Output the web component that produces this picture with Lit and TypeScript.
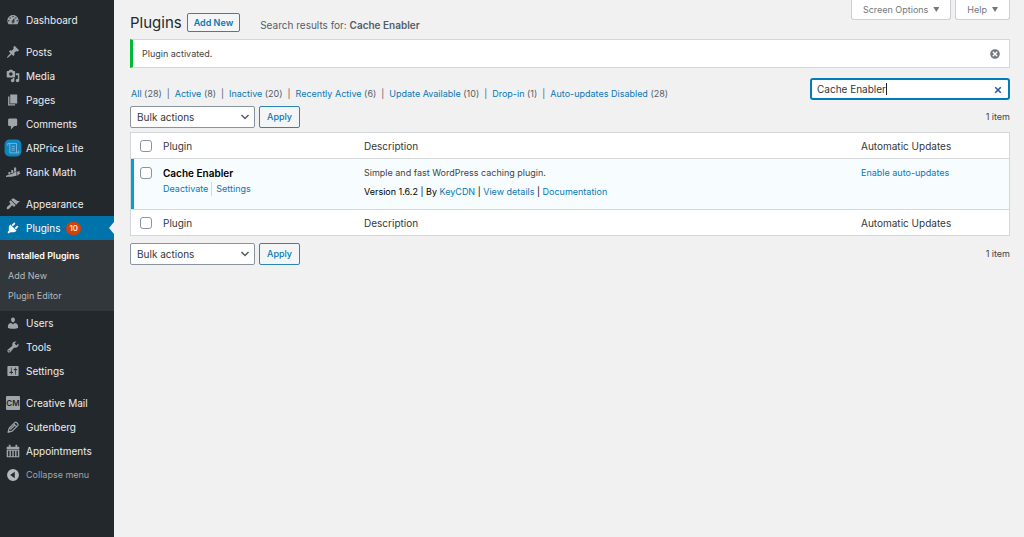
import { LitElement, html, svg, css, nothing } from "lit";
import { customElement, property } from "lit/decorators.js";
import { classMap } from "lit/directives/class-map.js";

const icons: Record<string, unknown> = {
  dashboard: svg`<path fill-rule="evenodd" d="M3.76 16h12.48c1.1-1.37 1.76-3.11 1.76-5 0-4.42-3.58-8-8-8s-8 3.58-8 8c0 1.89.66 3.63 1.76 5zM10 4c.55 0 1 .45 1 1s-.45 1-1 1-1-.45-1-1 .45-1 1-1zM6 6c.55 0 1 .45 1 1s-.45 1-1 1-1-.45-1-1 .45-1 1-1zm8 0c.55 0 1 .45 1 1s-.45 1-1 1-1-.45-1-1 .45-1 1-1zm-5.37 5.55L12 7v6c0 1.1-.9 2-2 2s-2-.9-2-2c0-.57.24-1.08.63-1.45zM4 10c.55 0 1 .45 1 1s-.45 1-1 1-1-.45-1-1 .45-1 1-1zm12 0c.55 0 1 .45 1 1s-.45 1-1 1-1-.45-1-1 .45-1 1-1zm-5 3c0-.55-.45-1-1-1s-1 .45-1 1 .45 1 1 1 1-.45 1-1z"/>`,
  post: svg`<path d="M10.44 3.02l1.82-1.82 6.36 6.35-1.83 1.82c-1.05-.68-2.48-.57-3.41.36l-.75.75c-.92.93-1.04 2.35-.35 3.41l-1.83 1.82-2.41-2.41-2.8 2.79c-.42.42-3.38 2.71-3.8 2.29s1.86-3.39 2.28-3.81l2.79-2.79L4.1 9.36l1.83-1.82c1.05.69 2.48.57 3.4-.36l.75-.75c.93-.92 1.05-2.35.36-3.41z"/>`,
  media: svg`<path fill-rule="evenodd" d="M13 11V4c0-.55-.45-1-1-1h-1.67L9 1H5L3.67 3H2c-.55 0-1 .45-1 1v7c0 .55.45 1 1 1h10c.55 0 1-.45 1-1zM7 4.5c1.38 0 2.5 1.12 2.5 2.5S8.38 9.5 7 9.5 4.5 8.38 4.5 7 5.62 4.5 7 4.5zM14 6h5v10.5c0 1.38-1.12 2.5-2.5 2.5S14 17.88 14 16.5s1.12-2.5 2.5-2.5c.17 0 .34.02.5.05V9h-3V6zm-4 8.05V13h2v3.5c0 1.38-1.12 2.5-2.5 2.5S7 17.88 7 16.5 8.12 14 9.5 14c.17 0 .34.02.5.05z"/>`,
  page: svg`<path d="M6 15V2h10v13H6zm-1 1h8v2H3V5h2v11z"/>`,
  comment: svg`<path d="M5 2h9c1.1 0 2 .9 2 2v7c0 1.1-.9 2-2 2h-2l-5 5v-5H5c-1.1 0-2-.9-2-2V4c0-1.1.9-2 2-2z"/>`,
  price: svg`<rect x="-2" y="-2" width="24" height="24" rx="7" fill="#0d86c0"/><g fill="none" stroke="#8fb9d6" stroke-width="1.2"><path d="M2.500 3.500H15V17M5.500 3.500V17H18M2.500 3.500V6.500M18 17V14"/><path d="M8 7.500h4.500M8 10.300h4.500M8 13h4.500"/></g>`,
  rank: svg`<path d="M0 15.500L5 13.500 9 13 12 10.500 15 9V15.500C10 17 5 17 0 17zM3.500 10h2.800v2.500L3.500 13.500zM7.500 7h2.800v4.500L7.500 12.300zM11.500 3.500h3v5L11.500 10zM16 9.500l3.500-1v3h1.500L16 15.500z"/>`,
  appearance: svg`<path d="M14.48 11.06L7.41 3.99l1.5-1.5c.5-.56 2.3-.47 3.51.32 1.21.8 1.43 1.28 2.91 2.1 1.18.64 2.45 1.26 4.45.85zm-.71.71L6.7 4.7 4.93 6.47c-.39.39-.39 1.02 0 1.41l1.06 1.06c.39.39.39 1.03 0 1.42-.6.6-1.43 1.11-2.21 1.69-.35.26-.7.53-1.01.84C1.43 14.23.4 16.08 1.4 17.07c.99 1 2.84-.03 4.18-1.36.31-.31.58-.66.85-1.02.57-.78 1.08-1.61 1.69-2.21.39-.39 1.02-.39 1.41 0l1.06 1.06c.39.39 1.02.39 1.41 0z"/>`,
  plugin: svg`<path d="M13.11 4.36L9.87 7.6 8 5.73l3.24-3.24c.35-.34 1.05-.2 1.56.32.52.51.66 1.21.31 1.55zm-8 1.77l.91-1.12 9.01 9.01-1.19.84c-.71.71-2.63 1.16-3.82 1.16H6.14L4.9 17.26c-.59.59-1.54.59-2.12 0-.59-.58-.59-1.53 0-2.12l1.24-1.24v-3.88c0-1.13.4-3.19 1.09-3.89zm7.26 3.97l3.24-3.24c.34-.35 1.04-.21 1.55.31.52.51.66 1.21.31 1.55l-3.24 3.25z"/>`,
  user: svg`<path d="M10 9.25c-2.27 0-2.73-3.44-2.73-3.44C7 4.02 7.82 2 9.97 2c2.16 0 2.98 2.02 2.71 3.81 0 0-.41 3.44-2.68 3.44zm0 2.57L12.72 10c2.39 0 4.52 2.33 4.52 4.53v2.49s-3.65 1.13-7.24 1.13c-3.65 0-7.24-1.13-7.24-1.13v-2.49c0-2.25 1.94-4.48 4.47-4.48z"/>`,
  tool: svg`<path fill-rule="evenodd" d="M16.68 9.77c-1.34 1.34-3.3 1.67-4.95.99l-5.41 6.52c-.99.99-2.59.99-3.58 0s-.99-2.59 0-3.57l6.52-5.42c-.68-1.65-.35-3.61.99-4.95 1.28-1.28 3.12-1.62 4.72-1.06l-2.89 2.89 2.82 2.82 2.86-2.87c.53 1.58.18 3.39-1.08 4.65zM3.81 16.21c.4.39 1.04.39 1.43 0 .4-.4.4-1.04 0-1.43-.39-.4-1.03-.4-1.43 0-.39.39-.39 1.03 0 1.43z"/>`,
  settings: svg`<path fill-rule="evenodd" d="M18 16V4c0-.55-.45-1-1-1H3c-.55 0-1 .45-1 1v12c0 .55.45 1 1 1h14c.55 0 1-.45 1-1zM8 11h1c.55 0 1 .45 1 1s-.45 1-1 1H8v1.5c0 .28-.22.5-.5.5s-.5-.22-.5-.5V13H6c-.55 0-1-.45-1-1s.45-1 1-1h1V5.500c0-.28.22-.5.5-.5s.5.22.5.5V11zm5-2h-1c-.55 0-1-.45-1-1s.45-1 1-1h1V5.500c0-.28.22-.5.5-.5s.5.22.5.5V7h1c.55 0 1 .45 1 1s-.45 1-1 1h-1v5.500c0 .28-.22.5-.5.5s-.5-.22-.5-.5V9z"/>`,
  pencil: svg`<path fill="none" stroke="currentColor" stroke-width="1.700" stroke-linejoin="round" d="M3 17.500L4.500 11.800 12.500 3.800Q13.800 2.500 15.200 3.800L16.800 5.400Q18 6.700 16.800 8L8.800 16zM11 5.500L15 9.500M6 13.500L13 6.800"/><path d="M2.500 18l1-4 3 3z"/>`,
  calendar: svg`<path fill-rule="evenodd" d="M1 4h3V1h2.500v3h7V1H16v3h3v3H1zM1 8h18v11H1zM3 9.500v8h2v-8zM7 9.500v8h2v-8zM11 9.500v8h2v-8zM15 9.500v8h2v-8z"/>`,
  collapse: svg`<path fill-rule="evenodd" d="M10 1.500a8.500 8.500 0 1 0 0 17 8.500 8.500 0 0 0 0-17zM12.500 5.500v9L6 10z"/>`,
  dismiss: svg`<path fill-rule="evenodd" d="M10 2a8 8 0 1 0 0 16 8 8 0 0 0 0-16zM7 5.500L10 8.300 13 5.500 14.500 7 11.700 10 14.500 13 13 14.500 10 11.700 7 14.500 5.500 13 8.300 10 5.500 7z"/>`,
  clear: svg`<path fill="none" stroke="currentColor" stroke-width="4" d="M3 3L17 17M17 3L3 17"/>`,
};

const icon = (name: string) =>
  html`<svg class="icon" viewBox="0 0 20 20" fill="currentColor" aria-hidden="true">${icons[name]}</svg>`;

interface MenuItem {
  label: string;
  icon: string;
  count?: number;
  children?: string[];
}

const menu: MenuItem[][] = [
  [{ label: "Dashboard", icon: "dashboard" }],
  [
    { label: "Posts", icon: "post" },
    { label: "Media", icon: "media" },
    { label: "Pages", icon: "page" },
    { label: "Comments", icon: "comment" },
    { label: "ARPrice Lite", icon: "price" },
    { label: "Rank Math", icon: "rank" },
  ],
  [
    { label: "Appearance", icon: "appearance" },
    { label: "Plugins", icon: "plugin", count: 10, children: ["Installed Plugins", "Add New", "Plugin Editor"] },
    { label: "Users", icon: "user" },
    { label: "Tools", icon: "tool" },
    { label: "Settings", icon: "settings" },
  ],
  [
    { label: "Creative Mail", icon: "cm" },
    { label: "Gutenberg", icon: "pencil" },
    { label: "Appointments", icon: "calendar" },
  ],
];

@customElement("admin-menu")
export class AdminMenu extends LitElement {
  static styles = css`
    :host { display: block; background: #23282d; color: #eee; font-size: 10px; line-height: 14px; padding-top: 8px; }
    * { box-sizing: border-box; }
    ul { list-style: none; margin: 0; padding: 0; }
    .group { margin-bottom: 8px; }
    .item { display: flex; align-items: center; gap: 6px; width: 100%; height: 24px; padding: 0 6px; color: inherit; text-decoration: none; position: relative; }
    .icon, .tile { width: 14px; height: 14px; flex: none; color: #a0a5aa; overflow: visible; }
    .tile { background: #a0a5aa; color: #23282d; border-radius: 1px; font-size: 8px; font-weight: 600; line-height: 14px; text-align: center; }
    .current { background: #0073aa; color: #fff; }
    .current .icon { color: #fff; }
    .current::after { content: ""; position: absolute; right: 0; top: 6px; border: 6px solid transparent; border-left: 0; border-right: 5px solid #f1f1f1; }
    .count { background: #d54208; color: #fff; border-radius: 7px; height: 13px; padding: 0 3px; font-size: 8px; line-height: 13px; font-weight: 500; }
    .sub { background: #32373c; padding: 6px 8px 5px; }
    .sub a { display: block; line-height: 20px; color: #b4b9be; text-decoration: none; font-size: 9px; }
    .sub .on { color: #fff; font-weight: 600; }
    .collapse { border: 0; background: none; font: 9px/14px Inter, sans-serif; color: #a0a5aa; text-align: left; }
    .collapse .icon { color: #b4b9be; }
    .tight { margin-bottom: 0; }
  `;

  render() {
    return html`<nav aria-label="Main menu">
      ${menu.map(
        (group, i) => html`<ul class=${classMap({ group: true, tight: i === menu.length - 1 })}>
          ${group.map(
            (m) => html`<li>
              <a href="#" class=${classMap({ item: true, current: !!m.children })}>
                ${m.icon === "cm" ? html`<span class="tile">CM</span>` : icon(m.icon)}
                <span>${m.label}</span>
                ${m.count ? html`<span class="count">${m.count}</span>` : nothing}
              </a>
              ${m.children
                ? html`<div class="sub">
                    ${m.children.map((c, n) => html`<a href="#" class=${classMap({ on: n === 0 })}>${c}</a>`)}
                  </div>`
                : nothing}
            </li>`
          )}
        </ul>`
      )}
      <button type="button" class="item collapse">${icon("collapse")}<span>Collapse menu</span></button>
    </nav>`;
  }
}

@customElement("table-nav")
export class TableNav extends LitElement {
  @property() label = "Select bulk action";

  static styles = css`
    :host { display: flex; align-items: center; gap: 4px; font-size: 9px; color: #444; }
    * { box-sizing: border-box; }
    .pick { position: relative; display: flex; }
    select { appearance: none; width: 125px; height: 22px; margin: 0; padding: 0 20px 0 6px; border: 1px solid #8a949e; border-radius: 2px; background: #fff; color: #32373c; font: 10px/14px Inter, sans-serif; }
    .chevron { position: absolute; right: 5px; top: 6px; width: 10px; height: 10px; pointer-events: none; }
    button { height: 22px; padding: 0 7px; border: 1px solid #2a86b8; border-radius: 2px; background: #f3f5f6; color: #0a78b4; font: 500 9px/14px Inter, sans-serif; }
    .count { margin-left: auto; }
  `;

  render() {
    return html`
      <span class="pick">
        <select aria-label=${this.label}><option>Bulk actions</option></select>
        <svg class="chevron" viewBox="0 0 10 10" fill="none" stroke="#555d66" stroke-width="1.500" aria-hidden="true"><path d="M1.500 3L5 6.500 8.500 3"/></svg>
      </span>
      <button type="button">Apply</button>
      <span class="count">1 item</span>
    `;
  }
}

const views: [string, number][] = [
  ["All", 28],
  ["Active", 8],
  ["Inactive", 20],
  ["Recently Active", 6],
  ["Update Available", 10],
  ["Drop-in", 1],
  ["Auto-updates Disabled", 28],
];

@customElement("app-root")
export class AppRoot extends LitElement {
  static styles = css`
    :host { display: grid; grid-template-columns: 114px minmax(0, 1fr); min-height: 100vh; background: #f1f1f1; color: #444; font: 9px/14px Inter, sans-serif; }
    * { box-sizing: border-box; }
    a { color: #0a78b4; text-decoration: none; }
    main { padding: 0 14px 0 16px; }
    header { display: flex; height: 39px; align-items: flex-start; }
    h1 { margin: 12px 5px 0 0; font-size: 15px; line-height: 22px; font-weight: 400; color: #23282d; }
    .add { margin-top: 13px; height: 19px; padding: 0 6px; border: 1px solid #2a86b8; border-radius: 2px; background: #f3f5f6; font-weight: 600; line-height: 18px; }
    .subtitle { margin: 18px 0 0 20px; font-size: 10px; line-height: 14px; color: #555d66; }
    .subtitle b { font-weight: 600; }
    .tabs { display: flex; gap: 4px; margin-left: auto; }
    .tabs button { display: flex; align-items: center; gap: 5px; height: 20px; padding: 0 11px; border: 1px solid #ccd0d4; border-top: 0; border-radius: 0 0 3px 3px; background: #fff; color: #72777c; font: 9px/14px Inter, sans-serif; }
    .caret { width: 6px; height: 5px; background: currentColor; clip-path: polygon(0 0, 100% 0, 50% 100%); }
    .notice { display: flex; align-items: center; justify-content: space-between; height: 29px; padding: 0 8px 0 9px; border: 1px solid #d4d7da; border-left: 3px solid #00ba37; background: #fff; }
    .notice button { display: flex; padding: 0; border: 0; background: none; color: #72777c; }
    .notice .icon { width: 12px; height: 12px; }
    .filters { display: flex; align-items: flex-start; justify-content: space-between; height: 28px; margin-top: 10px; }
    .views { display: flex; list-style: none; margin: 9px 0 0; padding: 0 0 0 1px; color: #555d66; white-space: nowrap; }
    .views li + li::before { content: "|"; padding: 0 5px; }
    .search { position: relative; width: 200px; }
    .search input { width: 100%; height: 22px; margin: 0; padding: 0 24px 0 5px; border: 2px solid #007cba; border-radius: 3px; background: #fff; color: #32373c; outline: 0; font: 10px/14px Inter, sans-serif; }
    .search .cursor { position: absolute; left: 76px; top: 5px; width: 1px; height: 12px; background: #222; }
    .search button { position: absolute; right: 8px; top: 8px; display: flex; padding: 0; border: 0; background: none; color: #2c5aa8; }
    .search .icon { width: 8px; height: 8px; }
    table { width: 100%; margin: 4px 0 7px; border-collapse: separate; border-spacing: 0; table-layout: fixed; border: 1px solid #d4d7da; background: #fff; }
    .c-check { width: 32px; }
    .c-plugin { width: 201px; }
    .c-auto { width: 148px; }
    th, td { padding: 0; text-align: left; font-weight: 400; vertical-align: top; }
    thead th, tfoot th { height: 26px; vertical-align: middle; font-size: 10px; color: #32373c; }
    thead th { border-bottom: 1px solid #d4d7da; }
    tfoot th { border-top: 1px solid #d4d7da; }
    .check { padding-left: 9px; }
    input[type="checkbox"] { appearance: none; display: block; width: 12px; height: 12px; margin: 0; border: 1px solid #8a949e; border-radius: 3px; background: #fff; }
    tbody tr { background: #f7fcfe; }
    tbody td, tbody th { height: 50px; padding-top: 7px; }
    tbody .check { padding: 8px 0 0 6px; border-left: 3px solid #00a0d2; }
    .name { display: block; font-size: 10px; font-weight: 600; color: #000; }
    p { margin: 0; }
    .actions { display: flex; gap: 3px; margin-top: 2px; }
    .actions a + a { border-left: 1px solid #d4d7da; padding-left: 4px; }
    .meta { margin-top: 5px; color: #000; }
  `;

  private columns(id: string) {
    return html`<tr>
      <th class="check"><input type="checkbox" id=${id} aria-label="Select all" /></th>
      <th scope="col">Plugin</th>
      <th scope="col">Description</th>
      <th scope="col">Automatic Updates</th>
    </tr>`;
  }

  render() {
    return html`
      <admin-menu></admin-menu>
      <main>
        <header>
          <h1>Plugins</h1>
          <a class="add" href="#">Add New</a>
          <span class="subtitle">Search results for: <b>Cache Enabler</b></span>
          <div class="tabs">
            <button type="button">Screen Options <span class="caret"></span></button>
            <button type="button">Help <span class="caret"></span></button>
          </div>
        </header>
        <div class="notice" role="status">
          <p>Plugin activated.</p>
          <button type="button" aria-label="Dismiss">${icon("dismiss")}</button>
        </div>
        <div class="filters">
          <ul class="views">
            ${views.map(([label, n]) => html`<li><a href="#">${label}</a> (${n})</li>`)}
          </ul>
          <div class="search">
            <input type="text" aria-label="Search installed plugins" value="Cache Enabler" />
            <span class="cursor"></span>
            <button type="button" aria-label="Clear">${icon("clear")}</button>
          </div>
        </div>
        <table-nav></table-nav>
        <table>
          <colgroup><col class="c-check" /><col class="c-plugin" /><col /><col class="c-auto" /></colgroup>
          <thead>${this.columns("all-top")}</thead>
          <tbody>
            <tr>
              <th class="check"><input type="checkbox" id="row" aria-label="Select Cache Enabler" /></th>
              <td>
                <strong class="name">Cache Enabler</strong>
                <p class="actions"><a href="#">Deactivate</a><a href="#">Settings</a></p>
              </td>
              <td>
                <p>Simple and fast WordPress caching plugin.</p>
                <p class="meta">Version 1.6.2 | By <a href="#">KeyCDN</a> | <a href="#">View details</a> | <a href="#">Documentation</a></p>
              </td>
              <td><a href="#">Enable auto-updates</a></td>
            </tr>
          </tbody>
          <tfoot>${this.columns("all-bottom")}</tfoot>
        </table>
        <table-nav></table-nav>
      </main>
    `;
  }
}
